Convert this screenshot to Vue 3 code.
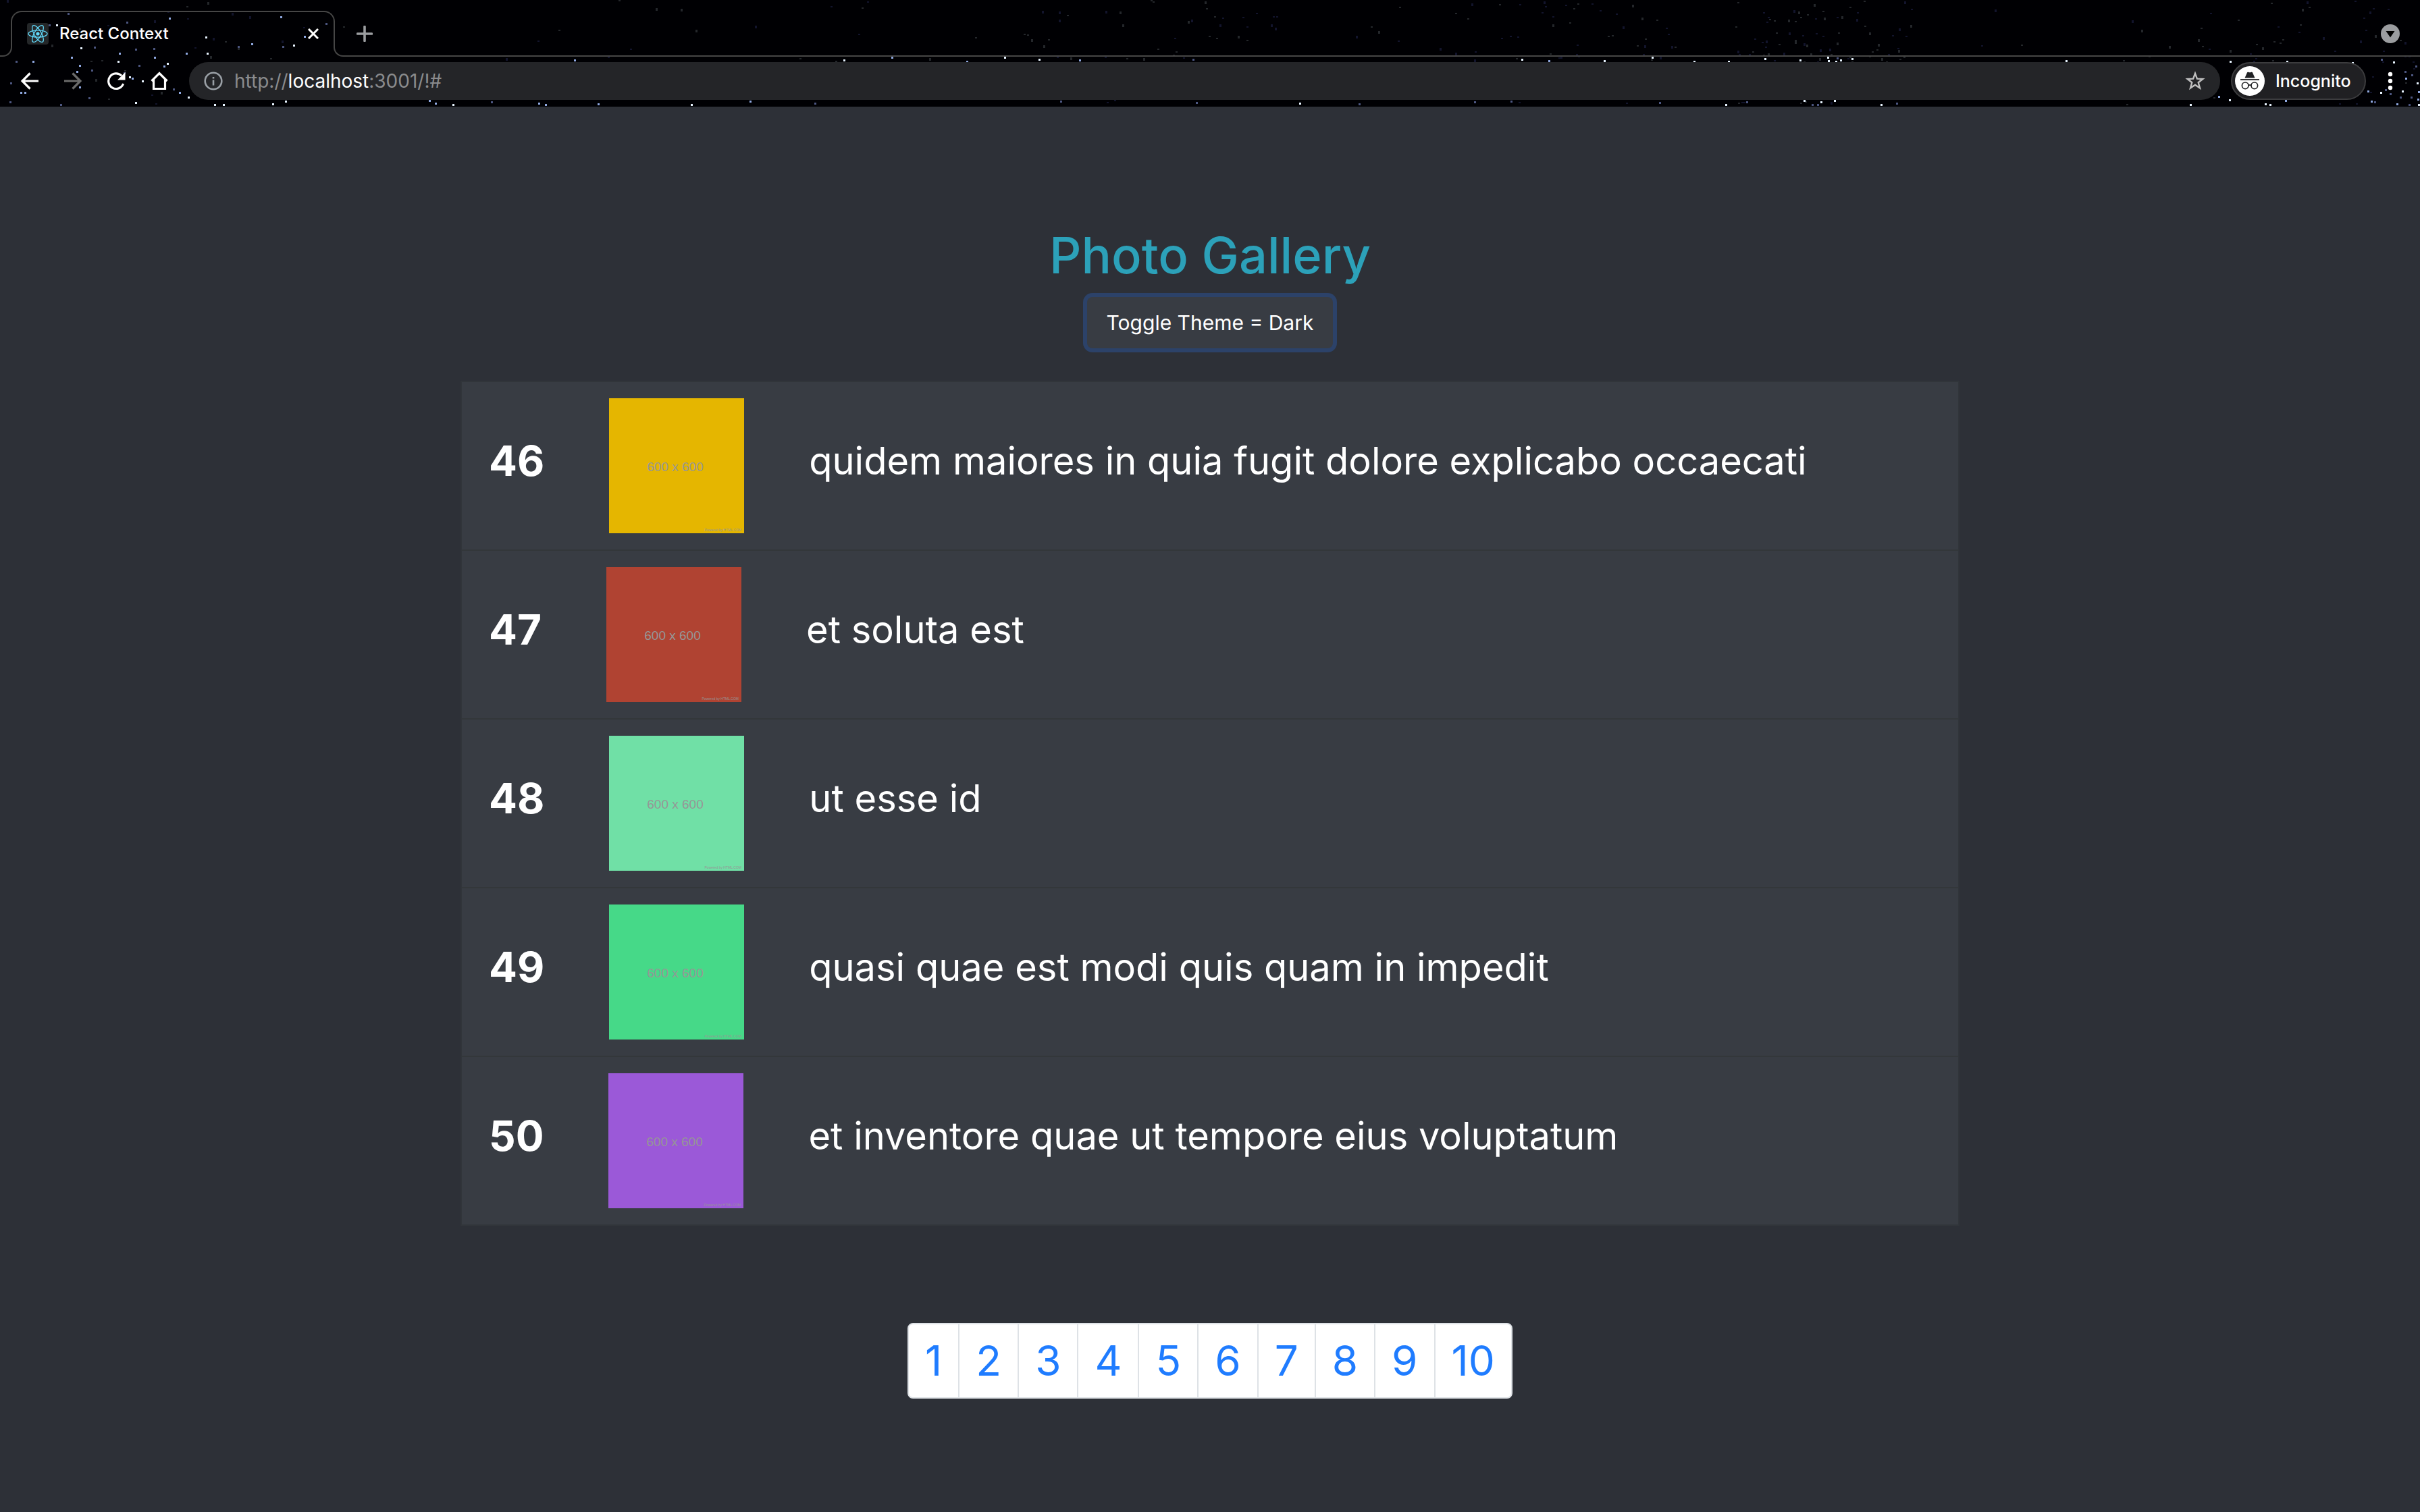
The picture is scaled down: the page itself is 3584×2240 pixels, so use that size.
<script setup>
import { ref } from 'vue'

const photos = [
  { id: 46, color: '#e5b600', title: 'quidem maiores in quia fugit dolore explicabo occaecati' },
  { id: 47, color: '#b04332', title: 'et soluta est' },
  { id: 48, color: '#70e0a6', title: 'ut esse id' },
  { id: 49, color: '#46d988', title: 'quasi quae est modi quis quam in impedit' },
  { id: 50, color: '#9b59d8', title: 'et inventore quae ut tempore eius voluptatum' },
]
const pages = [1, 2, 3, 4, 5, 6, 7, 8, 9, 10]
const theme = ref('Dark')
const url = ref('http://localhost:3001/!#')

function toggleTheme() {
  theme.value = theme.value === 'Dark' ? 'Light' : 'Dark'
}

// Bright stars of the browser theme: x, y, colour.
const W = '#e8f4ff'
const B = '#8fa8e0'
const D = '#4c5680'
const brightStars = [
  [83, 36, W], [250, 26, B], [304, 54, W], [176, 78, B], [174, 90, W], [119, 70, W], [275, 78, B],
  [306, 78, W], [372, 64, B], [434, 66, W], [450, 53, B], [482, 34, D], [415, 24, B], [72, 36, D],
  [139, 69, D], [48, 90, B], [105, 84, B], [228, 84, B], [242, 97, B], [247, 93, W], [191, 113, W],
  [210, 119, W], [195, 115, B], [113, 105, B], [30, 136, B], [36, 136, B], [15, 122, D], [14, 150, D],
  [200, 151, W], [278, 143, W], [317, 154, W], [330, 154, W], [403, 153, W], [422, 149, W], [635, 148, B],
  [644, 152, B], [670, 154, W], [100, 19, D], [227, 71, D], [418, 68, D], [352, 68, D], [205, 96, D],
  [117, 96, B], [117, 128, B], [131, 144, D], [89, 154, D], [183, 107, D], [256, 131, D], [265, 136, B],
  [187, 32, D], [172, 42, W], [195, 56, D], [200, 72, D], [135, 103, D], [226, 120, D], [23, 90, D],
  [850, 88, B], [1249, 88, W], [1320, 84, B], [1431, 90, B], [1487, 84, W], [1538, 87, W], [1598, 88, B],
  [1766, 87, D], [727, 150, D], [797, 152, B], [807, 154, B], [885, 153, B], [1023, 154, W], [1110, 149, B],
  [1206, 152, D], [1570, 149, D], [1771, 151, D], [1924, 152, W], [2012, 153, D], [2183, 150, D],
  [2237, 149, D], [2253, 87, W], [2293, 89, B], [2375, 89, W], [2446, 84, W], [2508, 90, W], [2559, 90, W],
  [2613, 86, W], [2665, 88, W], [2707, 89, W], [2718, 90, W], [2725, 88, W], [2742, 86, W], [2720, 85, D],
  [2706, 84, W], [3059, 89, W], [2671, 148, W], [2696, 150, W], [2716, 148, W], [2785, 154, W],
  [2808, 152, D], [2555, 154, W], [2586, 150, D], [2457, 151, D], [2683, 154, D], [2691, 154, D],
  [3302, 90, W], [3301, 147, W], [3243, 154, W], [3285, 142, B], [3386, 90, W], [3354, 153, W],
  [3361, 154, W], [3384, 148, B], [3483, 92, W], [3544, 91, W], [3526, 87, D], [3511, 149, B],
  [3525, 136, W], [3557, 134, W], [3562, 115, B], [3579, 122, W], [3581, 135, B], [3581, 154, W],
  [3549, 153, B], [3539, 138, D], [3561, 105, D], [3577, 97, D], [3506, 134, B], [3570, 143, D],
  [3516, 150, D], [3532, 132, D], [3567, 154, D], [3580, 146, B], [3554, 143, D], [3571, 110, D],
]

// Faint stars, denser towards the middle right of the strip.
let seed = 71
function next() {
  seed = (seed * 16807) % 2147483647
  return seed / 2147483647
}
const faintStars = []
for (let i = 0; i < 430; i++) {
  const zone = next()
  let x
  if (zone < 0.3) x = next() * 3584
  else if (zone < 0.48) x = 2150 + next() * 350
  else if (zone < 0.72) x = 2570 + next() * 260
  else if (zone < 0.84) x = 1500 + next() * 400
  else if (zone < 0.94) x = 3250 + next() * 334
  else x = 60 + next() * 420
  faintStars.push([
    Math.round(x),
    Math.round(next() * 154),
    next() < 0.5 ? '#24272b' : '#12142c',
    next() < 0.3 ? 4 : 2,
  ])
}
</script>

<template>
  <div class="window">
    <header class="browser">
      <svg class="sky" aria-hidden="true">
        <rect v-for="(s, i) in faintStars" :key="'f' + i" :x="s[0]" :y="s[1]" width="3" :height="s[3]" :fill="s[2]" />
        <rect v-for="(s, i) in brightStars" :key="'b' + i" :x="s[0]" :y="s[1]" width="3" height="3" :fill="s[2]" />
      </svg>

      <div class="tab-strip">
        <div class="strip-lead"></div>
        <div class="tab">
          <svg class="favicon" viewBox="0 0 32 32" aria-hidden="true">
            <rect width="32" height="32" rx="4" fill="#242729" />
            <g fill="none" stroke="#61dafb" stroke-width="1.3">
              <ellipse cx="16" cy="16" rx="14" ry="5.2" />
              <ellipse cx="16" cy="16" rx="14" ry="5.2" transform="rotate(60 16 16)" />
              <ellipse cx="16" cy="16" rx="14" ry="5.2" transform="rotate(120 16 16)" />
            </g>
            <circle cx="16" cy="16" r="2.6" fill="#61dafb" />
          </svg>
          <span class="tab-title">React Context</span>
          <button class="icon-button close" aria-label="Close tab">
            <svg viewBox="0 0 16 16" width="16" height="16"><path d="M1 1 15 15M15 1 1 15" stroke="#fff" stroke-width="3" /></svg>
          </button>
        </div>
        <div class="strip-rest">
          <button class="icon-button" aria-label="New tab">
            <svg viewBox="0 0 24 24" width="24" height="24"><path d="M12 1.500V22.500M1.500 12H22.500" stroke="#9b9da0" stroke-width="3.600" stroke-linecap="round" /></svg>
          </button>
          <button class="icon-button" aria-label="Search tabs">
            <svg viewBox="0 0 28 28" width="28" height="28"><circle cx="14" cy="14" r="14" fill="#9b9da0" /><path d="M7.500 10h13L14 19.500z" fill="#000" /></svg>
          </button>
        </div>
      </div>

      <div class="toolbar">
        <nav class="nav-buttons" aria-label="Browser">
          <button class="icon-button" aria-label="Back">
            <svg viewBox="0 0 28 28" width="28" height="28"><path d="M27 14H3M14.500 2.500 3 14l11.500 11.500" fill="none" stroke="#fff" stroke-width="3.200" /></svg>
          </button>
          <button class="icon-button" aria-label="Forward">
            <svg viewBox="0 0 28 28" width="28" height="28"><path d="M1 14H25M13.500 2.500 25 14 13.500 25.500" fill="none" stroke="#6b6b6b" stroke-width="3.200" /></svg>
          </button>
          <button class="icon-button" aria-label="Reload">
            <svg viewBox="0 0 28 28" width="28" height="28"><path d="M24.600 18A11.300 11.300 0 1 1 22 6.200" fill="none" stroke="#fff" stroke-width="3.200" /><path d="M27.500 1V12.500H16z" fill="#fff" /></svg>
          </button>
          <button class="icon-button" aria-label="Home">
            <svg viewBox="0 0 28 28" width="28" height="28"><path d="M2.500 14 14 2.500 25.500 14M5.500 12V25.500H22.500V12" fill="none" stroke="#fff" stroke-width="3.200" /></svg>
          </button>
        </nav>

        <div class="address">
          <svg class="info" viewBox="0 0 28 28" aria-hidden="true">
            <circle cx="14" cy="14" r="12.300" fill="none" stroke="#9aa0a6" stroke-width="2.600" />
            <path d="M14 12.500V20.500M14 8V10.600" stroke="#9aa0a6" stroke-width="2.600" />
          </svg>
          <a class="url" :href="url">http://<b>localhost</b>:3001/!#</a>
          <button class="icon-button" aria-label="Bookmark this page">
            <svg viewBox="0 0 30 30" width="30" height="30"><path d="M15 3.800 17.900 11.700 26.300 12 19.700 17.200 22 25.400 15 20.700 8 25.400 10.300 17.200 3.700 12 12.100 11.700z" fill="none" stroke="#c0c0c0" stroke-width="2.400" /></svg>
          </button>
        </div>

        <button class="incognito">
          <svg viewBox="0 0 44 44" width="44" height="44" aria-hidden="true">
            <circle cx="22" cy="22" r="22" fill="#fff" />
            <path d="M14.500 17.500 18 9.500Q18.500 8.400 19.700 8.800 22 9.900 24.300 8.800 25.500 8.400 26 9.500L29.500 17.500z" fill="#202124" />
            <path d="M8 20H36" stroke="#202124" stroke-width="1.800" />
            <g fill="none" stroke="#202124" stroke-width="1.700"><circle cx="15.200" cy="28.800" r="4.800" /><circle cx="28.800" cy="28.800" r="4.800" /><path d="M20 28.500Q22 27.300 24 28.500" /></g>
          </svg>
          <span>Incognito</span>
        </button>

        <button class="icon-button" aria-label="Menu">
          <svg viewBox="0 0 8 28" width="8" height="28" fill="#fff"><circle cx="4" cy="4" r="3.200" /><circle cx="4" cy="14" r="3.200" /><circle cx="4" cy="24" r="3.200" /></svg>
        </button>
      </div>
    </header>

    <main class="page">
      <h1>Photo Gallery</h1>
      <button class="toggle" @click="toggleTheme">Toggle Theme = {{ theme }}</button>

      <ul class="gallery">
        <li v-for="photo in photos" :key="photo.id">
          <strong>{{ photo.id }}</strong>
          <svg class="thumb" viewBox="0 0 200 200" role="img" :aria-label="photo.title">
            <rect width="200" height="200" :fill="photo.color" />
            <text class="size" x="98" y="108" text-anchor="middle">600 x 600</text>
            <text class="credit" x="196" y="197" text-anchor="end">Powered by HTML.COM</text>
          </svg>
          <span class="caption">{{ photo.title }}</span>
        </li>
      </ul>

      <nav class="pagination" aria-label="Pages">
        <a v-for="page in pages" :key="page" href="#">{{ page }}</a>
      </nav>
    </main>
  </div>
</template>

<style>
body {
  margin: 0;
  background: #2d3037;
}
</style>

<style scoped>
.window {
  display: flex;
  flex-direction: column;
  min-height: 100vh;
  background: #2d3037;
  color: #fff;
  font-family: Inter, Roboto, sans-serif;
}

button {
  font: inherit;
  color: inherit;
  cursor: pointer;
}

svg {
  display: block;
  flex: none;
}

.browser {
  position: relative;
  background: #000003;
}

.sky {
  position: absolute;
  inset: 0;
  width: 100%;
  height: 100%;
}

.icon-button {
  display: flex;
  padding: 0;
  border: 0;
  background: none;
}

.tab-strip {
  position: relative;
  display: flex;
  height: 84px;
}

.strip-lead,
.strip-rest {
  box-sizing: border-box;
  border-bottom: 2px solid #464646;
}

.strip-lead {
  width: 4px;
}

.strip-rest {
  flex: 1;
  display: flex;
  align-items: center;
  justify-content: space-between;
  margin-left: 12px;
  padding: 18px 30px 0 20px;
}

.tab {
  position: relative;
  box-sizing: border-box;
  display: flex;
  align-items: center;
  gap: 16px;
  width: 480px;
  margin: 16px 0 14px 12px;
  padding: 12px 22px 0;
  border: 2px solid #464646;
  border-bottom: 0;
  border-radius: 16px 16px 0 0;
}

/* Curved feet that join the tab to the line under the strip. */
.tab::before,
.tab::after {
  content: '';
  position: absolute;
  top: 100%;
  width: 12px;
  height: 12px;
  border-bottom: 2px solid #464646;
}

.tab::before {
  right: 100%;
  margin-right: -2px;
  border-right: 2px solid #464646;
  border-bottom-right-radius: 14px;
}

.tab::after {
  left: 100%;
  border-left: 2px solid #464646;
  border-bottom-left-radius: 14px;
}

.tab::before {
  margin-right: 0;
}

.favicon {
  width: 32px;
  height: 32px;
}

.tab-title {
  flex: 1;
  font-size: 24px;
  font-weight: 500;
  line-height: 32px;
}

.toolbar {
  position: relative;
  display: flex;
  align-items: center;
  height: 72px;
  padding: 0 40px 2px 30px;
}

.toolbar .nav-buttons {
  display: flex;
  gap: 36px;
}

.address {
  flex: 1;
  box-sizing: border-box;
  display: flex;
  align-items: center;
  height: 56px;
  margin: 0 16px 0 30px;
  padding: 0 22px 0 22px;
  border-radius: 28px;
  background: #242528;
}

.info {
  width: 28px;
  height: 28px;
}

.url {
  flex: 1;
  margin-left: 17px;
  color: #8a8b8d;
  font-size: 28px;
  line-height: 32px;
  text-decoration: none;
}

.url b {
  color: #fff;
  font-weight: 400;
}

.incognito {
  box-sizing: border-box;
  display: flex;
  align-items: center;
  gap: 16px;
  width: 200px;
  height: 56px;
  margin-right: 32px;
  padding: 0 4px;
  border: 2px solid #3c3c3e;
  border-radius: 28px;
  background: #202023;
  font-size: 25px;
  font-weight: 500;
}

.page {
  display: flex;
  flex-direction: column;
  align-items: center;
  padding: 172px 32px 64px;
}

h1 {
  margin: 0 0 14px;
  color: #2ca1b9;
  font-size: 74px;
  font-weight: 500;
  line-height: 96px;
}

.toggle {
  box-sizing: border-box;
  height: 76px;
  padding: 0 29px;
  border: 0;
  border-radius: 8px;
  background: #383c43;
  box-shadow: 0 0 0 6px #2c4269;
  font-size: 30px;
}

.gallery {
  box-sizing: border-box;
  width: 100%;
  max-width: 2220px;
  margin: 48px 0 144px;
  padding: 0;
  border: 2px solid #31353a;
  background: #383c43;
  list-style: none;
}

.gallery li {
  display: flex;
  align-items: center;
  gap: 96px;
  padding: 24px 40px;
}

.gallery li + li {
  border-top: 2px solid #33373a;
}

.gallery strong,
.caption {
  padding-bottom: 14px;
  font-size: 62px;
  line-height: 72px;
}

.caption {
  font-size: 56px;
}

.thumb {
  width: 200px;
  height: 200px;
}

.size,
.credit {
  fill: #969696;
  font-family: "Liberation Sans Narrow", "Liberation Sans", sans-serif;
}

.size {
  font-size: 19px;
}

.credit {
  font-size: 5px;
}

.pagination {
  display: flex;
  overflow: hidden;
  border: 2px solid #dee2e6;
  border-radius: 8px;
  background: #fff;
}

.pagination a {
  padding: 18px 24px;
  color: #1f7cff;
  font-size: 62px;
  line-height: 72px;
  text-decoration: none;
}

.pagination a + a {
  border-left: 2px solid #dee2e6;
}
</style>
